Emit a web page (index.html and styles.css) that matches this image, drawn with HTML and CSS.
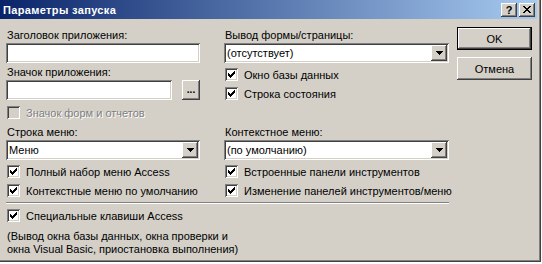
FILE: index.html
```html
<!DOCTYPE html>
<html>
<head>
    <title>Параметры запуска</title>
    <link rel="stylesheet" href="styles.css">
</head>
<body>
    <div class="window">
        <div class="titlebar">
            <span class="title">Параметры запуска</span>
            <div class="caption-buttons">
                <span class="cap-btn help">?</span>
                <span class="cap-btn">
                    <svg width="8" height="7" viewBox="0 0 8 7" shape-rendering="crispEdges"><path d="M0 0h2v1H0zM6 0h2v1H6zM1 1h2v1H1zM5 1h2v1H5zM2 2h4v1H2zM3 3h2v1H3zM2 4h4v1H2zM1 5h2v1H1zM5 5h2v1H5zM0 6h2v1H0zM6 6h2v1H6z" fill="#000"/></svg>
                </span>
            </div>
        </div>

        <div class="content">
            <div class="form">
                <!-- upper block: title, icon, form display -->
                <div class="grid top">
                    <div class="col">
                        <div class="label">Заголовок приложения:</div>
                        <div class="field"></div>
                        <div class="label second">Значок приложения:</div>
                        <div class="field-row">
                            <div class="field grow"></div>
                            <div class="btn dots">...</div>
                        </div>
                        <div class="check disabled">
                            <span class="box"></span>
                            <span class="text">Значок форм и отчетов</span>
                        </div>
                    </div>
                    <div class="col">
                        <div class="label">Вывод формы/страницы:</div>
                        <div class="select">
                            <span class="value">(отсутствует)</span>
                            <span class="drop"><svg width="7" height="4" viewBox="0 0 7 4" shape-rendering="crispEdges"><path d="M0 0h7v1H0zM1 1h5v1H1zM2 2h3v1H2zM3 3h1v1H3z" fill="#000"/></svg></span>
                        </div>
                        <div class="check first">
                            <span class="box"><svg width="7" height="7" viewBox="0 0 7 7" shape-rendering="crispEdges"><path d="M0 2h1v3H0zM1 3h1v3H1zM2 4h1v3H2zM3 3h1v3H3zM4 2h1v3H4zM5 1h1v3H5zM6 0h1v3H6z" fill="#000"/></svg></span>
                            <span class="text">Окно базы данных</span>
                        </div>
                        <div class="check">
                            <span class="box"><svg width="7" height="7" viewBox="0 0 7 7" shape-rendering="crispEdges"><path d="M0 2h1v3H0zM1 3h1v3H1zM2 4h1v3H2zM3 3h1v3H3zM4 2h1v3H4zM5 1h1v3H5zM6 0h1v3H6z" fill="#000"/></svg></span>
                            <span class="text">Строка состояния</span>
                        </div>
                    </div>
                </div>

                <!-- menus block -->
                <div class="grid menus">
                    <div class="col">
                        <div class="label">Строка меню:</div>
                        <div class="select">
                            <span class="value">Меню</span>
                            <span class="drop"><svg width="7" height="4" viewBox="0 0 7 4" shape-rendering="crispEdges"><path d="M0 0h7v1H0zM1 1h5v1H1zM2 2h3v1H2zM3 3h1v1H3z" fill="#000"/></svg></span>
                        </div>
                        <div class="check first">
                            <span class="box"><svg width="7" height="7" viewBox="0 0 7 7" shape-rendering="crispEdges"><path d="M0 2h1v3H0zM1 3h1v3H1zM2 4h1v3H2zM3 3h1v3H3zM4 2h1v3H4zM5 1h1v3H5zM6 0h1v3H6z" fill="#000"/></svg></span>
                            <span class="text">Полный набор меню Access</span>
                        </div>
                        <div class="check">
                            <span class="box"><svg width="7" height="7" viewBox="0 0 7 7" shape-rendering="crispEdges"><path d="M0 2h1v3H0zM1 3h1v3H1zM2 4h1v3H2zM3 3h1v3H3zM4 2h1v3H4zM5 1h1v3H5zM6 0h1v3H6z" fill="#000"/></svg></span>
                            <span class="text">Контекстные меню по умолчанию</span>
                        </div>
                    </div>
                    <div class="col">
                        <div class="label">Контекстное меню:</div>
                        <div class="select">
                            <span class="value">(по умолчанию)</span>
                            <span class="drop"><svg width="7" height="4" viewBox="0 0 7 4" shape-rendering="crispEdges"><path d="M0 0h7v1H0zM1 1h5v1H1zM2 2h3v1H2zM3 3h1v1H3z" fill="#000"/></svg></span>
                        </div>
                        <div class="check first">
                            <span class="box"><svg width="7" height="7" viewBox="0 0 7 7" shape-rendering="crispEdges"><path d="M0 2h1v3H0zM1 3h1v3H1zM2 4h1v3H2zM3 3h1v3H3zM4 2h1v3H4zM5 1h1v3H5zM6 0h1v3H6z" fill="#000"/></svg></span>
                            <span class="text">Встроенные панели инструментов</span>
                        </div>
                        <div class="check">
                            <span class="box"><svg width="7" height="7" viewBox="0 0 7 7" shape-rendering="crispEdges"><path d="M0 2h1v3H0zM1 3h1v3H1zM2 4h1v3H2zM3 3h1v3H3zM4 2h1v3H4zM5 1h1v3H5zM6 0h1v3H6z" fill="#000"/></svg></span>
                            <span class="text">Изменение панелей инструментов/меню</span>
                        </div>
                    </div>
                </div>

                <div class="separator"></div>

                <div class="check special">
                    <span class="box"><svg width="7" height="7" viewBox="0 0 7 7" shape-rendering="crispEdges"><path d="M0 2h1v3H0zM1 3h1v3H1zM2 4h1v3H2zM3 3h1v3H3zM4 2h1v3H4zM5 1h1v3H5zM6 0h1v3H6z" fill="#000"/></svg></span>
                    <span class="text">Специальные клавиши Access</span>
                </div>
                <p class="note">(Вывод окна базы данных, окна проверки и<br>окна Visual Basic, приостановка выполнения)</p>
            </div>

            <div class="actions">
                <div class="btn default">OK</div>
                <div class="btn">Отмена</div>
            </div>
        </div>
    </div>
</body>
</html>
```

FILE: styles.css
```css
body {
    margin: 0;
    background: #fff;
    font-family: "Liberation Sans", Arial, sans-serif;
    font-size: 11px;
    color: #000;
}
.window {
    width: 541px;
    height: 262px;
    box-sizing: border-box;
    padding-right: 4px;
    background: #d4d0c8;
    box-shadow: inset -1px -1px #404040, inset -2px -2px #808080;
}
.titlebar {
    height: 19px;
    display: flex;
    align-items: center;
    justify-content: space-between;
    padding: 0 2px 0 3px;
    background: linear-gradient(to right, #0a246a, #a6caf0);
}
.title {
    color: #fff;
    font-weight: bold;
    font-size: 11px;
    letter-spacing: 0.35px;
}
.caption-buttons {
    display: flex;
    gap: 2px;
}
.cap-btn {
    width: 16px;
    height: 14px;
    box-sizing: border-box;
    display: flex;
    align-items: center;
    justify-content: center;
    background: #d4d0c8;
    box-shadow: inset -1px -1px #404040, inset 1px 1px #fff, inset -2px -2px #808080;
}
.cap-btn.help {
    font-weight: bold;
    font-size: 11px;
    line-height: 14px;
}
.content {
    display: flex;
    padding: 0 0 0 6px;
}
.form {
    width: 443px;
    padding-top: 10px;
}
.grid {
    display: grid;
    grid-template-columns: 194px 225px;
    column-gap: 24px;
}
.col {
    display: flex;
    flex-direction: column;
}
.label {
    height: 13px;
    line-height: 13px;
    margin-bottom: 1px;
    padding-left: 1px;
    white-space: nowrap;
}
.label.second {
    margin-top: 3px;
}
.field {
    height: 20px;
    background: #fff;
    box-shadow: inset 1px 1px #808080, inset -1px -1px #fff, inset 2px 2px #404040, inset -2px -2px #d4d0c8;
}
.field-row {
    display: flex;
    gap: 10px;
}
.field.grow {
    flex-grow: 1;
}
.btn {
    display: flex;
    align-items: center;
    justify-content: center;
    box-sizing: border-box;
    background: #d4d0c8;
    box-shadow: inset -1px -1px #404040, inset 1px 1px #fff, inset -2px -2px #808080;
}
.btn.dots {
    width: 18px;
    height: 20px;
    font-weight: bold;
    font-size: 10px;
    letter-spacing: 0;
    padding-bottom: 2px;
}
.select {
    height: 20px;
    box-sizing: border-box;
    display: flex;
    align-items: center;
    justify-content: space-between;
    padding: 2px;
    background: #fff;
    box-shadow: inset 1px 1px #808080, inset -1px -1px #fff, inset 2px 2px #404040, inset -2px -2px #d4d0c8;
}
.select .value {
    padding-left: 1px;
}
.drop {
    width: 16px;
    height: 16px;
    display: flex;
    align-items: center;
    justify-content: center;
    background: #d4d0c8;
    box-shadow: inset -1px -1px #404040, inset 1px 1px #fff, inset -2px -2px #808080;
}
.check {
    display: flex;
    align-items: center;
    gap: 6px;
    height: 13px;
    margin-top: 6px;
    padding-left: 1px;
    white-space: nowrap;
}
.check.first {
    margin-top: 5px;
}
.box {
    width: 13px;
    height: 13px;
    flex-shrink: 0;
    box-sizing: border-box;
    display: flex;
    align-items: center;
    justify-content: center;
    background: #fff;
    box-shadow: inset 1px 1px #808080, inset -1px -1px #fff, inset 2px 2px #404040, inset -2px -2px #d4d0c8;
}
.check.disabled {
    margin-top: 6px;
}
.check.disabled .box {
    background: #d4d0c8;
}
.check.disabled .text {
    color: #808080;
    text-shadow: 1px 1px #fff;
}
.menus {
    margin-top: 7px;
}
.menus .label {
    margin-bottom: 1px;
}
.separator {
    margin-top: 5px;
    border-top: 1px solid #808080;
    border-bottom: 1px solid #fff;
    height: 0;
}
.check.special {
    margin-top: 5px;
}
.note {
    margin: 8px 0 0;
    line-height: 13px;
    padding-left: 1px;
    white-space: nowrap;
}
.actions {
    display: flex;
    flex-direction: column;
    gap: 7px;
    margin: 8px 0 0 8px;
}
.actions .btn {
    width: 75px;
    height: 23px;
}
.actions .btn.default {
    box-shadow: inset 0 0 0 1px #000, inset -2px -2px #404040, inset 2px 2px #fff, inset -3px -3px #808080;
}
```
